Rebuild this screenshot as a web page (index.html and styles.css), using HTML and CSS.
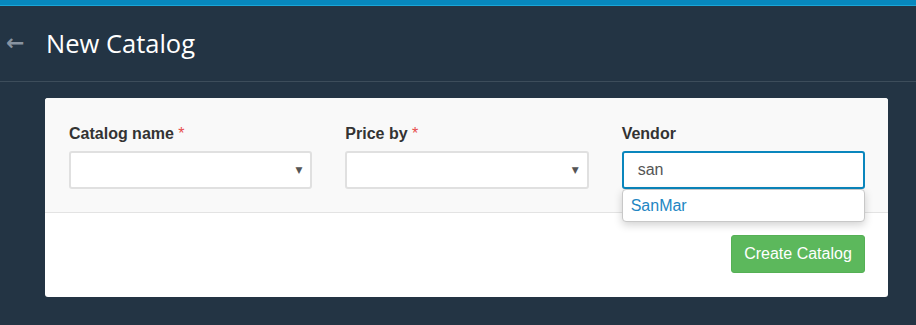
FILE: index.html
```html
<!DOCTYPE html>
<html>
<head>
<meta charset="utf-8">
<link rel="stylesheet" href="styles.css">
</head>
<body>
<div class="topbar"></div>
<header class="header">
  <span class="back">&#8592;</span>
  <h1 class="title">New Catalog</h1>
</header>
<main class="main">
  <section class="card">
    <div class="card-body">
      <div class="field">
        <label class="label">Catalog name <span class="req">*</span></label>
        <div class="select"><span class="caret">&#9660;</span></div>
      </div>
      <div class="field">
        <label class="label">Price by <span class="req">*</span></label>
        <div class="select"><span class="caret">&#9660;</span></div>
      </div>
      <div class="field vendor">
        <label class="label">Vendor</label>
        <div class="input focus">san</div>
        <ul class="suggest"><li class="suggest-item">SanMar</li></ul>
      </div>
    </div>
    <div class="card-foot">
      <button class="btn">Create Catalog</button>
    </div>
  </section>
</main>
</body>
</html>
```
FILE: styles.css
```css
* { box-sizing: border-box; }
html, body { margin: 0; padding: 0; }
body {
  background: #233444;
  font-family: "Liberation Sans", Arial, sans-serif;
  width: 916px;
  height: 325px;
  overflow: hidden;
}
.topbar {
  height: 6px;
  background: #0788be;
  border-bottom: 1px solid #1aa6d8;
}
.header {
  height: 76px;
  display: flex;
  align-items: center;
  border-bottom: 1px solid #3d4d5b;
  padding-bottom: 2px;
}
.back {
  color: #8893a0;
  font-size: 22px;
  width: 46px;
  padding-left: 6px;
  font-family: "DejaVu Sans", sans-serif;
  font-weight: bold;
  line-height: 1;
}
.title {
  margin: 0;
  color: #ffffff;
  font-family: "Open Sans", sans-serif;
  font-weight: 400;
  font-size: 25.5px;
}
.main {
  padding: 16px 28px 0 45px;
}
.card {
  background: #ffffff;
  border-radius: 3px;
}
.card-body {
  background: #f9f9f9;
  border-bottom: 1px solid #e3e3e3;
  padding: 24px 23px 23px 24px;
  display: grid;
  grid-template-columns: 1fr 1fr 1fr;
  column-gap: 33px;
  border-radius: 3px 3px 0 0;
}
.field { position: relative; }
.label {
  display: block;
  font-weight: bold;
  font-size: 16px;
  color: #333;
  height: 22px;
  line-height: 20px;
  padding-top: 2px;
  margin-bottom: 7px;
}
.req { color: #e74c4c; font-weight: normal; }
.select {
  height: 38px;
  background: #fff;
  border: 2px solid #e0e0e0;
  border-radius: 3px;
  display: flex;
  align-items: center;
  justify-content: flex-end;
  padding-right: 8px;
}
.caret {
  font-size: 9px;
  color: #555;
  font-family: "DejaVu Sans", sans-serif;
}
.input {
  height: 38px;
  background: #fff;
  border: 2px solid #0a86bd;
  border-radius: 3px;
  padding-left: 14px;
  font-size: 16px;
  color: #555;
  display: flex;
  align-items: center;
}
.suggest {
  position: absolute;
  left: 0;
  right: 0;
  top: 67px;
  margin: 0;
  padding: 0;
  list-style: none;
  background: #fff;
  border: 1px solid #c8c8c8;
  border-radius: 4px;
  box-shadow: 0 3px 8px rgba(0,0,0,0.18);
  z-index: 2;
}
.suggest-item {
  height: 31px;
  line-height: 31px;
  padding-left: 8px;
  font-size: 16px;
  color: #2286c3;
}
.card-foot {
  display: flex;
  justify-content: flex-end;
  padding: 22px 23px 24px;
}
.btn {
  height: 38px;
  width: 134px;
  background: #5cb85c;
  border: 1px solid #55b055;
  border-radius: 3px;
  color: #fff;
  font-family: "Liberation Sans", Arial, sans-serif;
  font-size: 16px;
  padding: 0;
}
```
